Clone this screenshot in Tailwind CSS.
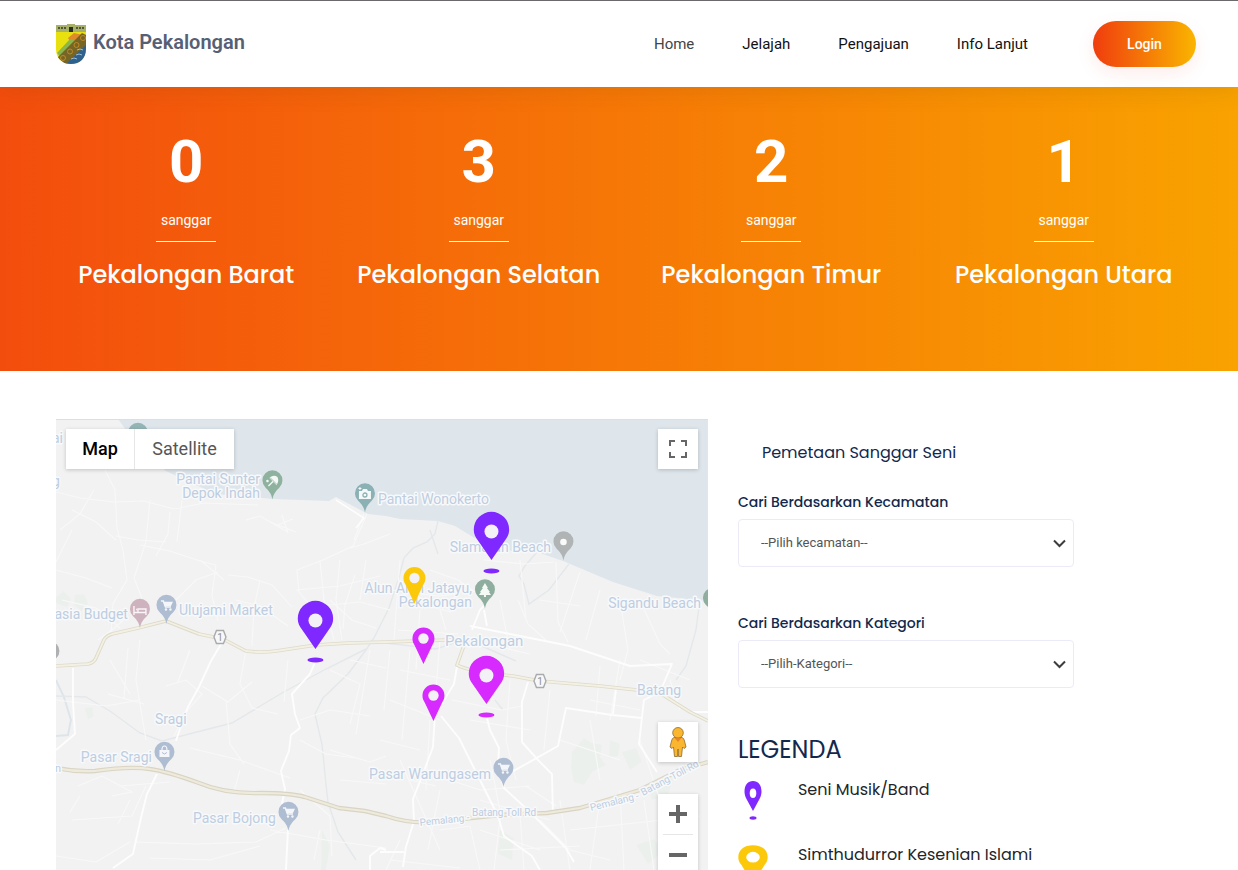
<!DOCTYPE html>
<html lang="id">
<head>
<meta charset="utf-8">
<meta name="viewport" content="width=device-width, initial-scale=1">
<title>Kota Pekalongan</title>
<script src="https://cdn.jsdelivr.net/npm/@tailwindcss/browser@4"></script>
</head>
<body class="bg-white font-[Roboto,sans-serif] text-[#212529]">

<header class="relative z-10 border-t border-[#6b696b] bg-white shadow-[0_6px_20px_rgba(80,60,0,0.1)]">
  <div class="flex h-[86px] items-center justify-between pr-[42px] pl-14">
    <a href="#" class="flex items-center gap-[7px]">
      <svg class="h-10 w-[30px]" viewBox="0 0 30 40" aria-hidden="true">
        <defs><clipPath id="shield"><path d="M0 1H11V0H19V1H30V25C30 34 24 40 15 40S0 34 0 25Z"/></clipPath></defs>
        <g clip-path="url(#shield)">
          <rect width="30" height="40" fill="#e9e00f"/>
          <rect width="30" height="8" fill="#a9b06a"/>
          <path d="M2 4h8M20 4h8" stroke="#4d5a35" stroke-width="2" stroke-dasharray="2 1"/>
          <path d="M13 3h4v5h-4z" fill="#26301c"/>
          <path d="M30 14V40H6Z" fill="#2f618f"/>
          <path d="M12 14l6-5 9 2-11 10z" fill="#e08a2b"/>
          <path d="M1 29L14 15l6 2L5 34Z" fill="#8ab64b"/>
          <path d="M1 34L26 9l4 2v10L10 40Z" fill="#766524"/>
          <g fill="none" stroke="#c08b25"><circle cx="7" cy="34" r="2.500"/><circle cx="14" cy="27.500" r="2.500"/><circle cx="20.500" cy="21" r="2.500"/><circle cx="27" cy="14" r="2.500"/></g>
          <path d="M21 26l3-1 3 1M20 31l3-1 3 1M15 35l3-1 3 1" fill="none" stroke="#9dbdd2"/>
        </g>
      </svg>
      <span class="pb-1 text-[20px] leading-6 font-semibold text-[#566075]">Kota Pekalongan</span>
    </a>
    <nav class="flex items-center text-[15px] text-[#111]">
      <ul class="flex gap-12">
        <li><a href="#" class="text-[#444]">Home</a></li>
        <li><a href="#">Jelajah</a></li>
        <li><a href="#">Pengajuan</a></li>
        <li><a href="#">Info Lanjut</a></li>
      </ul>
      <a href="#" class="ml-[65px] flex h-[46px] w-[103px] items-center justify-center rounded-full bg-linear-to-r/srgb from-[#f03c0e] to-[#fab500] text-sm font-medium text-white shadow-[0_6px_18px_rgba(240,70,60,0.1)]">Login</a>
    </nav>
  </div>
</header>

<section class="bg-linear-to-r/srgb from-[#f34d0d] to-[#f9a200] pt-[39px] pr-7 pb-20 pl-10 text-white">
  <div class="grid grid-cols-4 text-center">
    <div class="flex flex-col items-center"><strong class="text-[60px] leading-[72px] font-bold">0</strong><span class="mt-3 text-sm leading-5">sanggar</span><hr class="mt-[11px] w-15 border-white"><h3 class="mt-[17px] font-[Poppins,Inter,sans-serif] text-2xl leading-8 font-medium whitespace-nowrap">Pekalongan Barat</h3></div>
    <div class="flex flex-col items-center"><strong class="text-[60px] leading-[72px] font-bold">3</strong><span class="mt-3 text-sm leading-5">sanggar</span><hr class="mt-[11px] w-15 border-white"><h3 class="mt-[17px] font-[Poppins,Inter,sans-serif] text-2xl leading-8 font-medium whitespace-nowrap">Pekalongan Selatan</h3></div>
    <div class="flex flex-col items-center"><strong class="text-[60px] leading-[72px] font-bold">2</strong><span class="mt-3 text-sm leading-5">sanggar</span><hr class="mt-[11px] w-15 border-white"><h3 class="mt-[17px] font-[Poppins,Inter,sans-serif] text-2xl leading-8 font-medium whitespace-nowrap">Pekalongan Timur</h3></div>
    <div class="flex flex-col items-center"><strong class="text-[60px] leading-[72px] font-bold">1</strong><span class="mt-3 text-sm leading-5">sanggar</span><hr class="mt-[11px] w-15 border-white"><h3 class="mt-[17px] font-[Poppins,Inter,sans-serif] text-2xl leading-8 font-medium whitespace-nowrap">Pekalongan Utara</h3></div>
  </div>
</section>

<main class="grid grid-cols-12 pt-12 pr-7 pl-[41px]">
  <div class="col-span-7 px-[15px]">
    <div class="relative h-[500px] overflow-hidden bg-[#f1f1f1]">
      <svg class="size-full" viewBox="56 419 652 500" preserveAspectRatio="xMidYMin slice" role="img" aria-label="Peta Kota Pekalongan">
        <defs>
          <path id="poi" d="M0 0C-1-6-4-9-7-12A10 10 0 1 1 7-12C4-9 1-6 0 0Z"/>
          <g id="pin-lg"><path d="M0 0L-13.5-19.5C-16-23-17.7-26-17.7-30.5a17.7 17.7 0 0 1 35.4 0C17.7-26 16-23 13.5-19.5Z"/><ellipse cy="11" rx="8" ry="2.4"/><circle cy="-28.5" r="7" fill="#f3f0f6"/></g>
          <g id="pin-sm"><path d="M0 0L-8.5-18C-10-21-11-22-11-25.5a11 11 0 0 1 22 0C11-22 10-21 8.5-18Z"/><circle cy="-25.5" r="5.2" fill="#f3f0f6"/></g>
          <g id="cart" fill="none" stroke="#f4f6fa" stroke-width="1.3"><path d="M-6-5h2.500l2 6h5.500" /><path d="M-3-3.500H5L3.500-.5H-2Z" fill="#f4f6fa"/><circle cx="-1" cy="3.500" r=".6"/><circle cx="3.500" cy="3.500" r=".6"/></g>
          <path id="route" d="M-6 0L-3.500-6.500H3.500L6 0L3.500 6.500H-3.500Z" fill="#f8f8f8" stroke="#a8aaac" stroke-width="1.400"/>
        </defs>
        <path d="M56 419H708V919H56Z" fill="#f2f2f2"/>
        <path d="M118 419L140 449L166 471L189 482L216 494L273 499L329 501L336 497L368 514L386 516L400 519L438 521L455 526L473 537L500 550L537 552L563 561L613 582L657 596L708 601V419Z" fill="#dee6ec"/>
        <path d="M56 419.500H708" stroke="#dcdfe2"/>
        <g fill="#e9f0ea" opacity=".7">
          <path d="M56 597l8-6 7 8-4 8-11-4zM75 595l9-1 4 9-6 8-8-6zM85 708l7-1 2 9-6 4z"/>
          <path d="M572 752l12-14 8 5 10 2-2 12 6 8-14 7-8 13-10-3-3-14zM610 740l10 4-2 12-9 2zM622 752l14-4 6 14-12 8zM648 783l26-8-6 20-16 5zM636 845l18-6 10 12-16 13zM500 830l14 8-2 22-14-6zM322 830l8 16-4 24h-5z"/>
        </g>
        <g fill="none" stroke="#e4e8eb" stroke-width="1.400">
          <path d="M438 521l-3 13-8 8-14 6-9 10-5 20-10 30-15 30-8 12-18 24-25 24-8 16 7 30 4 40 2 18 10 30 18 28"/>
          <path d="M537 552l-12 14-6 10 5 8 5 20 20-14 20-26"/>
          <path d="M56 680l8 17 7 23-3 15-12 1" stroke="#dde5ea" stroke-width="2"/>
          <path d="M56 696l30 1 24 14 30 22 22 8 70-18 50-30 44-24 40-20M430 530l8 24M495 700l8 10M700 600l-4 30-10 36-10 14"/>
          <path d="M386 643l50 6 30-10 50 22"/>
        </g>
        <!-- minor streets -->
        <g fill="none" stroke="#f8f8f8" stroke-width="1.100">
          <path d="M56 492l24 6 34 4 30-1 30 8 30-6 54 2M60 530l20-16 14-24M56 562l16-32M105 470l10 20 2 38 6 22 4 30-14 24-2 30M150 500l-4 42-12 36 8 20M116 536l22 4 28 2M56 570l30 8 26 10M170 512l-2 22-12 22M182 500l-5 42M72 510l24 12 20 18M140 545l30 6 30 10 16 4M216 565l-4 30 6 26M228 575l20 2 24 8 20 22M260 580l-6 28-2 38M236 600l24 6 28 20M200 560l24 20M246 520l14-4 28 16M176 600l20-20 22-8M98 640l14-10 16-14M62 600l34 8 24 20"/>
          <path d="M275 526l18-7M270 522l26 10M282 515l6 18"/>
          <path d="M297 570l26-10 30-14 14-32M297 570l2 22 12 14M350 548l14-4 26-10M364 514l-10 26M320 560l4 40 10 40M340 560l-4 40 6 40M296 590l44-4 40-10M355 575l-10 30-2 24M300 608l60-6 30 8M366 560l-6 40M330 600l22 20 24 8"/>
          <path d="M140 640l-4 40 10 60M56 700l50 6 34-6M110 660l20 34M128 648l-4 50M108 694l36 10M166 686l20-6 16 14-16 18-12 24M190 650l-12 32M202 686l26 16 24-20M226 700l4 44 14 20M246 650l-6 34 12 24 26 6M288 660l-4 42M300 720l30-10 40 6M330 670l30 14-10 40M350 660l36 8M370 650l-14 84M300 740l26 14 30 4M190 748l50 12 50 18M240 770l-6 22M78 786l24-10 30 16-20 4M120 786l50-4M72 820l60-4 14-30M56 856l40 6 34-20M136 842l60 2 60-2 30-14M80 796l-10 16M150 858l60 2 50-14M130 800l-12 24M270 830l56 10 60 8M320 830l-6 30M300 790l30 26 2 40M330 750l40 12 16-6M340 780l46 4"/>
          <path d="M484 560l40 4 30-2M518 600l10 24 20 18M430 570l28 10 20 14M440 610l6 20M392 590l46 6 20-2M400 560l-6 80M405 600l46 12M398 630l60 4M420 610l-4 60M440 640l-4 50M580 572l-20 60M600 590l-14 50M620 600l8 50-8 30M520 560l6 60M540 600l40 6M470 640l60 14M500 600l10 50M640 600l20 44 10 10M556 562l2 60 10 20"/>
          <path d="M390 650l-6 60M400 670l50 10M390 700l50 20M410 650l-8 90M380 740l40 10M430 720l-4 70M452 700l50 10 20-4M470 720l60 10M510 680l-4 60 10 40M550 690l-6 60M600 666l-4 50M620 660l-10 60M560 740l60 20M590 720l10 60M640 740l20 60M420 770l60 20 50-4M440 790l-12 60M490 760l10 50M400 760l40 90M500 820l-6 50M520 814l4 56M540 820l30 30 40 10M560 800l10 70M600 800l-10 70M620 790l4 80M644 800l10 70M480 830l60 20M500 850l80-4M570 830l130-14M670 800l14 70M440 830l30-4 10 44M410 780l26 6M526 786l30 20M400 840l-14 30"/>
          <path d="M390 860l70 8M480 800l70 20M590 700l50 10M640 660l50 20M670 680l10 30"/>
        </g>
        <!-- secondary roads -->
        <g fill="none" stroke="#fdfdfd" stroke-width="1.900" stroke-linejoin="round">
          <path d="M223 641l-12 20-12 26-11 20-8 22-4 12M157 774l-10 20-6 24-8 36-20 14M316 660l-6 14-18 20 3 20 5 14-9 7-2 16-8 20 4 18-4 20M288 830l-2 40M73 668v34l2 32-19 16M370 870v-14l10-8 6 2"/>
          <path d="M457 667l-3 17-19 31-2 32-12 32-8 20 1 22-8 26-3 20M441 716l18 22 22 44 17 34 6 20 28 20 8 14M487 718l3 12 9 18-1 20 6 20 26 24 36 36 8 14M380 852h24M472 630l8-20 4-4M470 626l40 8 60 12 60 20 42-2-12 28-16 8-5 44 18 28M528 682l-6 20v40l16 18 14 14 1 40M510 773l48-27 8-38 46 7 30 3M616 690l-3 24M484 610l3 16M708 712h-16"/>
          <path d="M336 500l28 18-8 10" stroke-width="1.500"/>
        </g>
        <!-- national road and toll road -->
        <g fill="none" stroke-linejoin="round">
          <path d="M56 666L88 664Q94 663 96 658L104 640Q106 636 112 634L138 628L166 621L199 634L223 639L246 651Q262 653 276 651L316 645L349 643L386 642L447 640L466 640L457 665Q470 672 513 676L540 681L600 686L637 690L663 695L690 712L708 721" stroke="#dedaca" stroke-width="3.600"/>
          <path d="M56 666L88 664Q94 663 96 658L104 640Q106 636 112 634L138 628L166 621L199 634L223 639L246 651Q262 653 276 651L316 645L349 643L386 642L447 640L466 640L457 665Q470 672 513 676L540 681L600 686L637 690L663 695L690 712L708 721" stroke="#f3f0e4" stroke-width="1.800"/>
          <path d="M56 768Q75 772 95 771Q130 766 150 769Q166 771 199 783Q225 794 260 793Q290 793 305 797L339 808L365 811L386 816Q410 824 433 822L500 815L547 813L580 808L640 790L680 770L708 762" stroke="#d9d4c3" stroke-width="4.400"/>
          <path d="M56 768Q75 772 95 771Q130 766 150 769Q166 771 199 783Q225 794 260 793Q290 793 305 797L339 808L365 811L386 816Q410 824 433 822L500 815L547 813L580 808L640 790L680 770L708 762" stroke="#eeebdd" stroke-width="2.200"/>
        </g>
        <use href="#route" x="220" y="637"/><use href="#route" x="540" y="681"/>
        <g font-family="Roboto, sans-serif" font-size="10" fill="#8d9092" text-anchor="middle"><text x="220" y="641">1</text><text x="540" y="685">1</text></g>
        <!-- place labels -->
        <g font-family="Roboto, sans-serif" font-size="14" fill="#becde0" stroke="#f7f9fb" stroke-width="3" stroke-linejoin="round" paint-order="stroke">
          <g text-anchor="end">
            <text x="63" y="443">ai</text><text x="60" y="486">g</text>
            <text x="260" y="484">Pantai Sunter</text><text x="260" y="498">Depok Indah</text>
            <text x="128" y="619">asia Budget</text>
            <text x="551" y="552">Slamaran Beach</text>
            <text x="472" y="593">Alun Alun Jatayu,</text><text x="472" y="607">Pekalongan</text>
            <text x="701" y="608">Sigandu Beach</text>
            <text x="152" y="762">Pasar Sragi</text><text x="276" y="823">Pasar Bojong</text>
            <text x="491" y="779">Pasar Warungasem</text>
            <text x="61" y="772" font-size="11">n</text>
          </g>
          <text x="378" y="504">Pantai Wonokerto</text><text x="179" y="615">Ulujami Market</text>
          <text x="445" y="646" font-size="15">Pekalongan</text><text x="637" y="695">Batang</text><text x="155" y="724">Sragi</text>
          <g font-size="10"><text transform="translate(420 826) rotate(-6)">Pemalang -</text><text transform="translate(472 816)">Batang Toll Rd</text>
          <text transform="translate(591 811) rotate(-14)">Pemalang -</text><text transform="translate(643 796) rotate(-28)">Batang Toll Rd</text></g>
        </g>
        <!-- points of interest -->
        <use href="#poi" x="138" y="452" fill="#93b5b5"/>
        <use href="#poi" x="272.500" y="499.500" fill="#8fb29f"/>
        <g transform="translate(272.500 481)" fill="none" stroke="#f4f8f6" stroke-width="1.300"><path d="M-3-3Q1-7 5-4Q7 0 4 4Z" fill="#f4f8f6" stroke="none"/><path d="M1 0l-5 5"/><path d="M-2-3l6 6" stroke="#8fb29f" stroke-width=".8"/><circle cx="-5" cy="0" r=".6"/></g>
        <use href="#poi" x="365" y="512.500" fill="#8bb1b5"/>
        <g transform="translate(365 494)"><path d="M-6-3h3l1-2h4l1 2h3v8H-6Z" fill="#f4f8f8"/><circle cy="1" r="2" fill="#f4f8f8" stroke="#8bb1b5" stroke-width="1.300"/><path d="M-5-7v3M-6.500-5.500h3" stroke="#f4f8f8"/></g>
        <use href="#poi" x="140" y="628" fill="#ceb3be"/>
        <path d="M134 606v9M134 612.500h12v2.500M146 612v-3h-8v3M136 609.500h1" fill="none" stroke="#faf5f7" stroke-width="1.400"/>
        <use href="#poi" x="166.500" y="624" fill="#afbdd2"/><use href="#cart" x="167" y="606"/>
        <use href="#poi" x="563.500" y="560.500" fill="#b1b4b5"/><circle cx="563.500" cy="542" r="3.300" fill="#fafafa"/>
        <use href="#poi" x="485" y="608.500" fill="#8fae9f"/><path d="M485 583l3 5h-1l3 4h-1l2 3h-5v2h-2v-2h-5l2-3h-1l3-4h-1Z" fill="#f6faf7"/>
        <use href="#poi" x="713" y="617" fill="#8fae9f"/>
        <circle cx="50" cy="651" r="9.500" fill="#aeb0b2"/>
        <use href="#poi" x="164.500" y="771" fill="#afbdd2"/><path d="M159.500 750h10v7h-10ZM162 750q0-4 2.500-4t2.500 4" fill="#f4f6fa"/><path d="M162 750q0-4 2.500-4t2.500 4" fill="#afbdd2" stroke="#f4f6fa" stroke-width="1.200"/><path d="M162 752.500q2.500 3 5 0" fill="none" stroke="#afbdd2"/>
        <use href="#poi" x="288.500" y="831" fill="#afbdd2"/><use href="#cart" x="289" y="813"/>
        <use href="#poi" x="503.500" y="787" fill="#afbdd2"/><use href="#cart" x="504" y="769"/>
        <!-- art studio markers -->
        <use href="#pin-lg" x="491.500" y="560" fill="#7f28ff"/>
        <use href="#pin-lg" x="315.500" y="649" fill="#7f28ff"/>
        <use href="#pin-sm" x="414.500" y="603.500" fill="#fcc90a"/>
        <use href="#pin-sm" x="423.500" y="664" fill="#d62aff"/>
        <use href="#pin-sm" x="433.500" y="721" fill="#d62aff"/>
        <use href="#pin-lg" x="486.500" y="704" fill="#d62aff"/>
      </svg>

      <div class="absolute top-[10px] left-[10px] flex h-10 bg-white text-lg shadow-[0_1px_4px_rgba(0,0,0,0.2)]">
        <button type="button" class="w-[69px] border-r border-[#e6e6e6] font-medium text-black">Map</button>
        <button type="button" class="w-[99px] text-[#565656]">Satellite</button>
      </div>
      <button type="button" aria-label="Layar penuh" class="absolute top-[10px] right-[10px] grid size-10 place-items-center bg-white shadow-[0_1px_4px_rgba(0,0,0,0.2)]">
        <svg class="size-[18px]" viewBox="0 0 18 18" fill="#666"><path d="M0 0H6V2H2V6H0ZM12 0H18V6H16V2H12ZM0 12H2V16H6V18H0ZM16 12H18V18H12V16H16Z"/></svg>
      </button>
      <button type="button" aria-label="Street View" class="absolute top-[303px] right-[10px] grid size-10 place-items-center bg-white shadow-[0_1px_4px_rgba(0,0,0,0.2)]">
        <svg class="h-[30px] w-[18px]" viewBox="0 0 18 30" fill="#fab62e" stroke="#8b6b35" stroke-width=".8"><path d="M5 10.500H13Q15 11 15.500 14L17 20 15 21.500 13.500 20 12.500 29.500H9.500L9 22 8.500 29.500H5.500L4.500 20 3 21.500 1 20 2.500 14Q3 11 5 10.500Z"/><circle cx="9" cy="5.800" r="5.300"/><path d="M5.500 10.700h7L9 15Z" fill="#e5852c" stroke="none"/></svg>
      </button>
      <div class="absolute top-[375px] right-[10px] flex w-10 flex-col items-center bg-white shadow-[0_1px_4px_rgba(0,0,0,0.2)]">
        <button type="button" aria-label="Perbesar" class="grid size-10 place-items-center"><svg class="size-[18px]" viewBox="0 0 18 18"><path d="M7 0H11V7H18V11H11V18H7V11H0V7H7Z" fill="#666"/></svg></button>
        <span class="h-px w-[30px] bg-[#e6e6e6]"></span>
        <button type="button" aria-label="Perkecil" class="grid size-10 place-items-center"><svg class="size-[18px]" viewBox="0 0 18 18"><path d="M0 7H18V11H0Z" fill="#666"/></svg></button>
      </div>
    </div>
  </div>

  <aside class="col-span-4 pt-[22px] pr-[39px] pl-[15px] font-[Poppins,Inter,sans-serif] text-[#12294d]">
    <h2 class="pl-6 text-base leading-6">Pemetaan Sanggar Seni</h2>
    <form>
      <label for="kecamatan" class="mt-[27px] block text-sm leading-5 font-medium">Cari Berdasarkan Kecamatan</label>
      <div class="relative mt-[7px]">
        <select id="kecamatan" class="h-12 w-full appearance-none rounded-[4px] border border-[#ebebf8] bg-white pl-[22px] font-[Roboto,sans-serif] text-[13px] text-[#555]"><option>--Pilih kecamatan--</option></select>
        <svg class="pointer-events-none absolute top-5 right-2 h-[9px] w-[13px]" viewBox="0 0 13 9" fill="none" stroke="#3d3d3d" stroke-width="2"><path d="M1 1.500L6.500 7 12 1.500"/></svg>
      </div>
      <label for="kategori" class="mt-[46px] block text-sm leading-5 font-medium">Cari Berdasarkan Kategori</label>
      <div class="relative mt-[7px]">
        <select id="kategori" class="h-12 w-full appearance-none rounded-[4px] border border-[#ebebf8] bg-white pl-[22px] font-[Roboto,sans-serif] text-[13px] text-[#555]"><option>--Pilih-Kategori--</option></select>
        <svg class="pointer-events-none absolute top-5 right-2 h-[9px] w-[13px]" viewBox="0 0 13 9" fill="none" stroke="#3d3d3d" stroke-width="2"><path d="M1 1.500L6.500 7 12 1.500"/></svg>
      </div>
    </form>
    <h2 class="mt-[46px] text-2xl leading-8">LEGENDA</h2>
    <ul class="mt-3 text-base leading-6 text-[#212529]">
      <li class="flex h-[65px] gap-[30px]">
        <svg class="mt-0.5 h-10 w-[30px] shrink-0" viewBox="0 0 30 40" fill="#7f28ff"><path fill-rule="evenodd" d="M15 31L8.500 19C7 16 6.500 14 6.500 11.500C6.500 5 10 1 15 1S23.500 5 23.500 11.500C23.500 14 23 16 21.500 19ZM15 8.500A3.300 4.800 0 1 0 15 18.100A3.300 4.800 0 1 0 15 8.500Z"/><ellipse cx="15" cy="38" rx="3.500" ry="1.700"/></svg>
        <span class="whitespace-nowrap">Seni Musik/Band</span>
      </li>
      <li class="flex h-[65px] gap-[30px]">
        <svg class="mt-0.5 h-10 w-[30px] shrink-0" viewBox="0 0 30 40" fill="#fcc90a"><path fill-rule="evenodd" d="M15 39L3.500 20C1 17 .3 15 .3 12C.3 5 6 .3 15 .3S29.700 5 29.700 12C29.700 15 29 17 26.500 20ZM15 6.800A6.800 5.400 0 1 0 15 17.600A6.800 5.400 0 1 0 15 6.800Z"/></svg>
        <span class="whitespace-nowrap">Simthudurror Kesenian Islami</span>
      </li>
    </ul>
  </aside>
</main>
</body>
</html>
